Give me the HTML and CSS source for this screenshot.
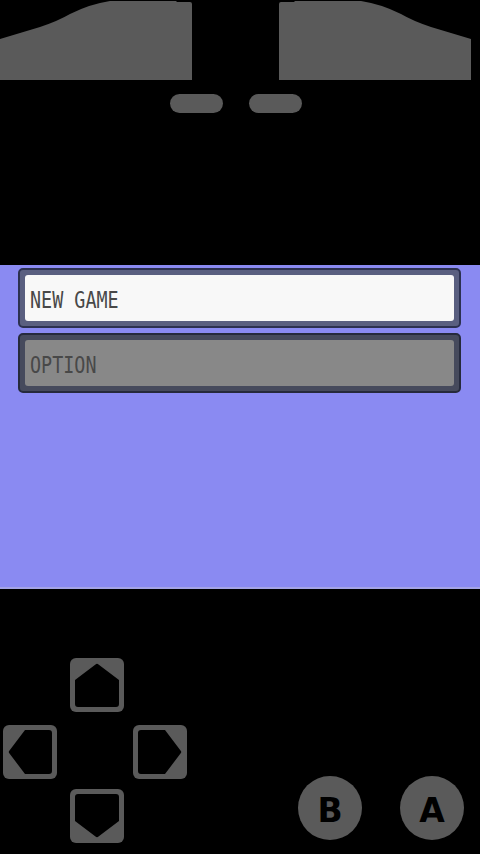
FILE: index.html
```html
<!DOCTYPE html>
<html lang="en">
	<head>
		<meta charset="UTF-8">
		<link rel="stylesheet" href="styles.css">
		<title>Emulator</title>
	</head>
	<body>
		<div class="shoulders">
			<svg class="shoulder" width="192" height="80" viewBox="0 0 192 80">
				<path d="M0 39 L40 27 Q58 21 70 14 Q90 4 110 1 H176 L177 2 H190 Q192 2 192 4 V80 H0 Z" fill="#5a5a5a"/>
			</svg>
			<svg class="shoulder flip" width="192" height="80" viewBox="0 0 192 80">
				<path d="M0 39 L40 27 Q58 21 70 14 Q90 4 110 1 H176 L177 2 H190 Q192 2 192 4 V80 H0 Z" fill="#5a5a5a"/>
			</svg>
		</div>
		<div class="pills">
			<div class="pill"></div>
			<div class="pill"></div>
		</div>

		<div class="screen">
			<div class="menu-item active">
				<div class="face"><span class="label">NEW GAME</span></div>
			</div>
			<div class="menu-item">
				<div class="face"><span class="label">OPTION</span></div>
			</div>
		</div>

		<div class="controls">
			<div class="dpad">
				<svg class="key up" width="54" height="54" viewBox="0 0 54 54">
					<rect width="54" height="54" rx="6" fill="#5a5a5a"/>
					<path d="M25.5 6.5 Q27 5 28.5 6.5 L49 22 V46 Q49 49 46 49 H8 Q5 49 5 46 V22 Z" fill="#000"/>
				</svg>
				<svg class="key left" width="54" height="54" viewBox="0 0 54 54">
					<rect width="54" height="54" rx="6" fill="#5a5a5a"/>
					<path d="M25.5 6.5 Q27 5 28.5 6.5 L49 22 V46 Q49 49 46 49 H8 Q5 49 5 46 V22 Z" fill="#000" transform="rotate(-90 27 27)"/>
				</svg>
				<svg class="key right" width="54" height="54" viewBox="0 0 54 54">
					<rect width="54" height="54" rx="6" fill="#5a5a5a"/>
					<path d="M25.5 6.5 Q27 5 28.5 6.5 L49 22 V46 Q49 49 46 49 H8 Q5 49 5 46 V22 Z" fill="#000" transform="rotate(90 27 27)"/>
				</svg>
				<svg class="key down" width="54" height="54" viewBox="0 0 54 54">
					<rect width="54" height="54" rx="6" fill="#5a5a5a"/>
					<path d="M25.5 6.5 Q27 5 28.5 6.5 L49 22 V46 Q49 49 46 49 H8 Q5 49 5 46 V22 Z" fill="#000" transform="rotate(180 27 27)"/>
				</svg>
			</div>
			<div class="ab">
				<div class="round">B</div>
				<div class="round">A</div>
			</div>
		</div>
	</body>
</html>
```
FILE: styles.css
```css
body {
	margin: 0;
	width: 480px;
	height: 854px;
	overflow: hidden;
	background: #000;
	font-family: 'DejaVu Sans', sans-serif;
}
svg {
	display: block;
}

/* shoulder buttons */
.shoulders {
	display: flex;
	justify-content: space-between;
	height: 80px;
	padding-right: 9px;
}
.shoulder.flip {
	transform: scaleX(-1);
}
.pills {
	display: flex;
	justify-content: center;
	gap: 26px;
	margin-top: 14px;
	padding-right: 9px;
}
.pill {
	width: 53px;
	height: 19px;
	border-radius: 10px;
	background: #5a5a5a;
}

/* game screen */
.screen {
	margin-top: 152px;
	height: 319px;
	padding: 3px 19px 0 18px;
	background: #8a8af2;
	border-bottom: 2px solid #a4a4e6;
}
.menu-item {
	box-sizing: border-box;
	height: 60px;
	margin-bottom: 5px;
	padding: 5px;
	border: 2px solid #2c3150;
	border-radius: 5px;
	background: #5a5f80;
}
.menu-item .face {
	height: 100%;
	display: flex;
	align-items: center;
	padding: 4px 0 0 5px;
	box-sizing: border-box;
	border-radius: 3px;
	background: #888;
}
.menu-item.active .face {
	background: #f8f8f8;
}
.menu-item:not(.active) {
	border-color: #262a3c;
	background: #464a5c;
}
.label {
	display: inline-block;
	font-family: 'DejaVu Sans Mono', monospace;
	font-size: 23px;
	color: #484848;
	transform: scaleX(0.8);
	transform-origin: left center;
}

/* pad */
.controls {
	display: flex;
	justify-content: space-between;
	align-items: flex-end;
	margin-top: 69px;
	padding: 0 16px 0 3px;
}
.dpad {
	display: grid;
	grid-template-columns: 67px 63px 54px;
	grid-template-rows: 67px 64px 54px;
}
.key.up {
	grid-column: 2;
	grid-row: 1;
}
.key.left {
	grid-column: 1;
	grid-row: 2;
}
.key.right {
	grid-column: 3;
	grid-row: 2;
}
.key.down {
	grid-column: 2;
	grid-row: 3;
}
.ab {
	display: flex;
	gap: 38px;
	margin-bottom: 3px;
}
.round {
	width: 64px;
	height: 64px;
	border-radius: 50%;
	background: #5a5a5a;
	display: flex;
	align-items: center;
	justify-content: center;
	padding-top: 4px;
	box-sizing: border-box;
	font-size: 33px;
	font-weight: bold;
	color: #000;
}
```
